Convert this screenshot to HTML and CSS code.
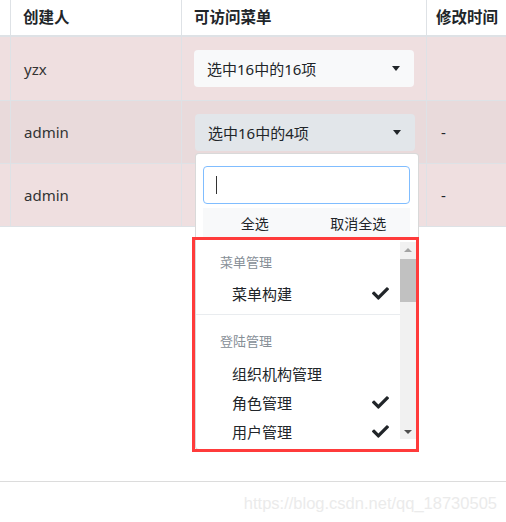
FILE: index.html
```html
<!DOCTYPE html>
<html lang="zh">
<head>
<meta charset="utf-8">
<link rel="stylesheet" href="styles.css">
</head>
<body>
<div class="page">
  <div class="table">
    <div class="row head">
      <div class="cell c0"></div>
      <div class="cell c1">创建人</div>
      <div class="cell c2">可访问菜单</div>
      <div class="cell c3">修改时间</div>
    </div>
    <div class="row body r1">
      <div class="cell c0"></div>
      <div class="cell c1">yzx</div>
      <div class="cell c2"><div class="select">选中16中的16项<span class="caret"></span></div></div>
      <div class="cell c3"></div>
    </div>
    <div class="row body r2">
      <div class="cell c0"></div>
      <div class="cell c1">admin</div>
      <div class="cell c2"><div class="select open">选中16中的4项<span class="caret"></span></div></div>
      <div class="cell c3">-</div>
    </div>
    <div class="row body r3">
      <div class="cell c0"></div>
      <div class="cell c1">admin</div>
      <div class="cell c2"></div>
      <div class="cell c3">-</div>
    </div>
  </div>

  <div class="dropdown">
    <div class="search"><span class="cursor"></span></div>
    <div class="actions"><span>全选</span><span>取消全选</span></div>
    <div class="listwrap">
      <div class="list">
        <div class="group first">菜单管理</div>
        <div class="item">菜单构建<svg class="check" viewBox="0 0 512 512"><path d="M173.9 439.4l-166.4-166.4c-10-10-10-26.2 0-36.2l36.2-36.2c10-10 26.2-10 36.2 0L192 312.7 432.1 72.6c10-10 26.2-10 36.2 0l36.2 36.2c10 10 10 26.2 0 36.2l-294.4 294.4c-10 10-26.2 10-36.2 0z"/></svg></div>
        <div class="divider"></div>
        <div class="group">登陆管理</div>
        <div class="item">组织机构管理</div>
        <div class="item">角色管理<svg class="check" viewBox="0 0 512 512"><path d="M173.9 439.4l-166.4-166.4c-10-10-10-26.2 0-36.2l36.2-36.2c10-10 26.2-10 36.2 0L192 312.7 432.1 72.6c10-10 26.2-10 36.2 0l36.2 36.2c10 10 10 26.2 0 36.2l-294.4 294.4c-10 10-26.2 10-36.2 0z"/></svg></div>
        <div class="item">用户管理<svg class="check" viewBox="0 0 512 512"><path d="M173.9 439.4l-166.4-166.4c-10-10-10-26.2 0-36.2l36.2-36.2c10-10 26.2-10 36.2 0L192 312.7 432.1 72.6c10-10 26.2-10 36.2 0l36.2 36.2c10 10 10 26.2 0 36.2l-294.4 294.4c-10 10-26.2 10-36.2 0z"/></svg></div>
      </div>
      <div class="scrollbar">
        <span class="arrow up"></span>
        <span class="thumb"></span>
        <span class="rest"></span>
        <span class="arrow down"></span>
      </div>
    </div>
  </div>
  <div class="highlight"></div>

  <div class="footer">
    <span class="watermark">https://blog.csdn.net/qq_18730505</span>
  </div>
</div>
</body>
</html>
```

FILE: styles.css
```css
html, body {
  margin: 0;
  padding: 0;
  background: #fff;
  overflow: hidden;
}
body {
  font-family: "Noto Sans", "Noto Sans CJK SC", sans-serif;
  color: #212529;
  font-size: 15px;
  width: 506px;
  height: 522px;
}
.page {
  position: relative;
  width: 506px;
  height: 522px;
  overflow: hidden;
}
.table {
  display: flex;
  flex-direction: column;
  width: 506px;
  overflow: hidden;
}
.row {
  display: grid;
  grid-template-columns: 10px 171px 245px 80px;
}
.cell {
  border-left: 1px solid #dee2e6;
  box-sizing: border-box;
  padding: 0 12px;
  display: flex;
  align-items: center;
  white-space: nowrap;
}
.c0 { border-left: none; }
.head {
  height: 37px;
  border-bottom: 2px solid #dee2e6;
  box-sizing: border-box;
}
.head .cell {
  font-weight: 700;
  font-size: 15.5px;
  padding-bottom: 2px;
}
.head .c3 { padding-left: 9px; padding-right: 0; }
.body {
  height: 63px;
  border-top: 1px solid #dee2e6;
  box-sizing: border-box;
}
.row.r1 { height: 63px; border-top: none; }
.r1, .r3 { background: #efdfe0; }
.r2 { background: #e9dadb; }
.r3 { height: 64px; border-bottom: 1px solid #dee2e6; }
.body .c1 { padding-left: 13px; color: #333; }
.body .c3 { padding-left: 14px; }
.select {
  position: relative;
  width: 220px;
  height: 37px;
  box-sizing: border-box;
  background: #f8f9fa;
  border-radius: 4px;
  display: flex;
  align-items: center;
  padding-left: 13px;
  font-size: 15px;
  color: #212529;
  flex-shrink: 0;
}
.select.open { background: #e2e6ea; margin-left: 1px; margin-top: 1px; }
.caret {
  position: absolute;
  right: 14px;
  top: 16px;
  width: 0;
  height: 0;
  border-left: 4px solid transparent;
  border-right: 4px solid transparent;
  border-top: 5px solid #212529;
}
.dropdown {
  position: absolute;
  left: 195px;
  top: 153px;
  width: 224px;
  height: 297px;
  box-sizing: border-box;
  background: #fff;
  border: 1px solid rgba(0,0,0,0.15);
  border-radius: 4px;
  padding: 12px 8px 0 7px;
  display: flex;
  flex-direction: column;
}
.search {
  height: 38px;
  box-sizing: border-box;
  border: 1px solid #80bdff;
  border-radius: 4px;
  display: flex;
  align-items: center;
  padding-left: 12px;
}
.cursor {
  width: 1px;
  height: 18px;
  background: #333;
}
.actions {
  margin-top: 4px;
  height: 30px;
  background: #f8f9fa;
  display: flex;
  align-items: center;
  font-size: 14px;
  color: #212529;
}
.actions span { flex: 1; text-align: center; }
.listwrap {
  margin: 4px -8px 0 -7px;
  height: 197px;
  display: flex;
}
.list {
  flex: 1;
  display: flex;
  flex-direction: column;
}
.group {
  height: 26px;
  flex-shrink: 0;
  padding-left: 24px;
  font-size: 13px;
  color: #868e96;
  display: flex;
  align-items: center;
  margin-top: 12px;
}
.group.first { margin-top: 6px; }
.item {
  height: 29px;
  flex-shrink: 0;
  padding-left: 36px;
  padding-right: 11px;
  display: flex;
  align-items: center;
  justify-content: space-between;
  font-size: 15px;
  color: #212529;
}
.group + .item { margin-top: 6px; }
.group.first + .item { margin-top: 5px; }
.divider {
  height: 1px;
  flex-shrink: 0;
  background: #e9ecef;
  margin-top: 6px;
}
.check {
  width: 17px;
  height: 17px;
  fill: #212529;
}
.scrollbar {
  width: 16px;
  margin-right: 2px;
  background: #f1f1f1;
  display: flex;
  flex-direction: column;
  align-items: center;
}
.arrow {
  width: 0;
  height: 0;
  border-left: 4px solid transparent;
  border-right: 4px solid transparent;
}
.arrow.up { border-bottom: 4px solid #a3a3a3; margin-top: 6px; margin-bottom: 7px; }
.arrow.down { border-top: 4px solid #505050; margin-bottom: 5px; }
.thumb {
  width: 16px;
  height: 43px;
  background: #c1c1c1;
}
.rest { flex: 1; }
.highlight {
  position: absolute;
  left: 192px;
  top: 237px;
  width: 227px;
  height: 215px;
  box-sizing: border-box;
  border: 3px solid #ff3b3b;
}
.footer {
  position: absolute;
  left: 0;
  top: 481px;
  width: 506px;
  height: 41px;
  border-top: 1px solid #dcdcdc;
  box-sizing: border-box;
  display: flex;
  justify-content: flex-end;
  align-items: center;
  padding-right: 9px;
}
.watermark {
  font-family: "Liberation Sans", Arial, sans-serif;
  font-size: 16.5px;
  color: #ebebeb;
  margin-top: 2px;
}
```
